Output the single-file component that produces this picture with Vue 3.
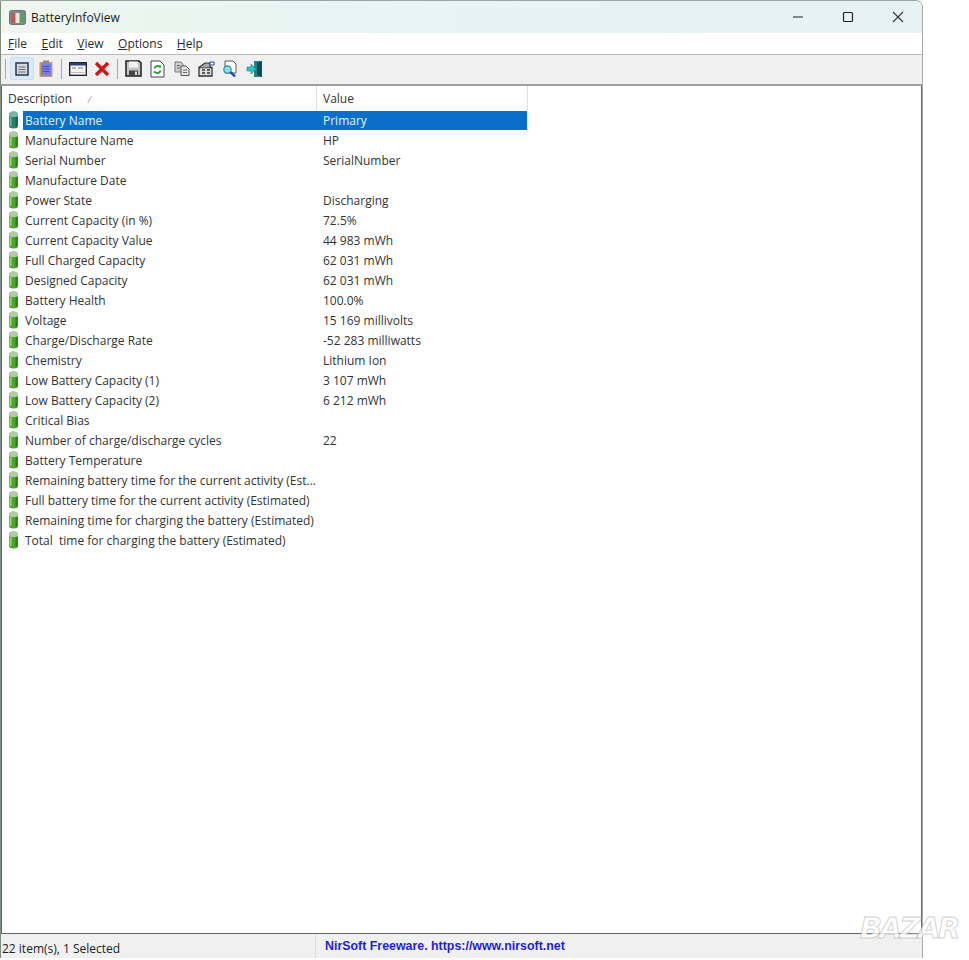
<script setup>
const menus = [
  { key: "F", rest: "ile" },
  { key: "E", rest: "dit" },
  { key: "V", rest: "iew" },
  { key: "O", rest: "ptions" },
  { key: "H", rest: "elp" },
];

const rows = [
  ["Battery Name", "Primary"],
  ["Manufacture Name", "HP"],
  ["Serial Number", "SerialNumber"],
  ["Manufacture Date", ""],
  ["Power State", "Discharging"],
  ["Current Capacity (in %)", "72.5%"],
  ["Current Capacity Value", "44 983 mWh"],
  ["Full Charged Capacity", "62 031 mWh"],
  ["Designed Capacity", "62 031 mWh"],
  ["Battery Health", "100.0%"],
  ["Voltage", "15 169 millivolts"],
  ["Charge/Discharge Rate", "-52 283 milliwatts"],
  ["Chemistry", "Lithium Ion"],
  ["Low Battery Capacity (1)", "3 107 mWh"],
  ["Low Battery Capacity (2)", "6 212 mWh"],
  ["Critical Bias", ""],
  ["Number of charge/discharge cycles", "22"],
  ["Battery Temperature", ""],
  ["Remaining battery time for the current activity (Est...", ""],
  ["Full battery time for the current activity (Estimated)", ""],
  ["Remaining time for charging the battery (Estimated)", ""],
  ["Total  time for charging the battery (Estimated)", ""],
];
</script>

<template>
  <div class="page">
    <div class="window">
      <div class="titlebar">
        <svg class="app-icon" width="17" height="15" viewBox="0 0 17 15">
          <rect x="0.500" y="0.500" width="16" height="14" rx="2" fill="#7d8794" stroke="#6d7480" />
          <rect x="2" y="3" width="4" height="10" fill="#c8574f" />
          <rect x="6.500" y="3" width="4" height="10" fill="#e9e6df" />
          <rect x="11" y="3" width="4" height="10" fill="#5aa05a" />
        </svg>
        <span class="app-title">BatteryInfoView</span>
        <div class="caption-btns">
          <svg width="12" height="12" viewBox="0 0 12 12"><path d="M1 6h10" stroke="#222" stroke-width="1" fill="none" /></svg>
          <svg width="12" height="12" viewBox="0 0 12 12"><rect x="1.500" y="1.500" width="9" height="9" rx="1" stroke="#222" stroke-width="1.200" fill="none" /></svg>
          <svg width="12" height="12" viewBox="0 0 12 12"><path d="M1 1l10 10M11 1L1 11" stroke="#333" stroke-width="1.100" fill="none" /></svg>
        </div>
      </div>

      <div class="menubar">
        <span v-for="m in menus" :key="m.key" class="menu-item"><u>{{ m.key }}</u>{{ m.rest }}</span>
      </div>

      <div class="toolbar">
        <span class="sep"></span>
        <span class="tool active">
          <svg width="14" height="14" viewBox="0 0 14 14">
            <rect x="1" y="1" width="12" height="12" fill="#d5d8dc" stroke="#2a3550" stroke-width="1.500" />
            <path d="M3.500 5h7M3.500 7.500h7M3.500 10h7" stroke="#6d7077" stroke-width="1" />
          </svg>
        </span>
        <span class="tool">
          <svg width="14" height="17" viewBox="0 0 14 17">
            <rect x="0.500" y="2" width="13" height="15" rx="1" fill="#c9975f" />
            <rect x="2" y="3.500" width="10" height="12" fill="#7a7fe6" />
            <path d="M3.500 6.500h7M3.500 9h7M3.500 11.500h7" stroke="#4a4fb5" stroke-width="1" />
            <rect x="4" y="0.500" width="6" height="3" fill="#8a8a8a" />
          </svg>
        </span>
        <span class="sep"></span>
        <span class="tool">
          <svg width="18" height="14" viewBox="0 0 18 14">
            <rect x="0.700" y="0.700" width="16.600" height="12.600" fill="#f4f4f4" stroke="#1a1a1a" stroke-width="1.300" />
            <rect x="1" y="1" width="16" height="2.500" fill="#2b3f80" />
            <path d="M3 6h4M9 6h5" stroke="#a0a0a0" stroke-width="1.600" />
            <path d="M1 10.500h16" stroke="#bbb" stroke-width="1" />
          </svg>
        </span>
        <span class="tool">
          <svg width="16" height="16" viewBox="0 0 16 16">
            <path d="M2 2l12 12M14 2L2 14" stroke="#d2161c" stroke-width="3.400" fill="none" />
          </svg>
        </span>
        <span class="sep"></span>
        <span class="tool">
          <svg width="17" height="17" viewBox="0 0 17 17">
            <path d="M1 1h13l2 2v13H1z" fill="#c4c4c4" stroke="#1c1c1c" stroke-width="1.500" />
            <rect x="4" y="1.500" width="9" height="6" fill="#f2f2f2" />
            <rect x="4" y="10.500" width="9" height="5.500" fill="#444" />
            <rect x="10" y="11.500" width="2" height="3.500" fill="#ddd" />
          </svg>
        </span>
        <span class="tool">
          <svg width="15" height="18" viewBox="0 0 15 18">
            <path d="M1 1h9l4 4v12H1z" fill="#fff" stroke="#444" stroke-width="1" />
            <path d="M4.500 8.500a3.200 3.200 0 0 1 5.500-1.500M10.500 10.500a3.200 3.200 0 0 1-5.500 1.500" stroke="#16a02c" stroke-width="1.800" fill="none" />
            <path d="M8.800 7.800l2.400-.2-.3-2.500zM6 11l-2.400.3.300 2.400z" fill="#16a02c" />
          </svg>
        </span>
        <span class="tool">
          <svg width="16" height="15" viewBox="0 0 16 15">
            <path d="M1 1h6l2 2v8H1z" fill="#ccc" stroke="#777" stroke-width="1" />
            <path d="M7 5h5l3 3v6.500H7z" fill="#e6e6e6" stroke="#555" stroke-width="1" />
            <path d="M3 4.500h3M3 7h3M9 9h4M9 11.500h4" stroke="#666" stroke-width="1" />
          </svg>
        </span>
        <span class="tool">
          <svg width="17" height="16" viewBox="0 0 17 16">
            <path d="M1 6.500h13V15H1z" fill="#e0e0e0" stroke="#333" stroke-width="1.300" />
            <path d="M1 6.500 7 2h5v4.500" fill="#aaa" stroke="#333" stroke-width="1.200" />
            <path d="M4 9h3M9 9h3M4 12h3M9 12h3" stroke="#333" stroke-width="1.300" />
            <path d="M12 1h4v3h-4z" fill="#fff" stroke="#2d45a8" stroke-width="1" />
          </svg>
        </span>
        <span class="tool">
          <svg width="17" height="18" viewBox="0 0 17 18">
            <path d="M3 1h8l3 3v9H3z" fill="#fff" stroke="#555" stroke-width="1" />
            <circle cx="5.500" cy="9.500" r="3.700" fill="#8fdcee" stroke="#2a8fb0" stroke-width="1.200" />
            <path d="M8.500 12l4.500 4.500" stroke="#2343b0" stroke-width="2.400" />
          </svg>
        </span>
        <span class="tool">
          <svg width="18" height="18" viewBox="0 0 18 18">
            <path d="M8 1h8v16H8z" fill="#2b7f86" />
            <path d="M11 3l5-2v16l-5-2z" fill="#124d55" />
            <path d="M1 7h4V4l5 5-5 5v-3H1z" fill="#27c9c4" stroke="#138a8c" stroke-width="0.600" />
          </svg>
        </span>
      </div>

      <div class="list">
        <div class="list-head">
          <div class="head-cell head-desc">Description<span class="sort-mark">⁄</span></div>
          <div class="head-cell head-value">Value</div>
        </div>
        <div v-for="(row, i) in rows" :key="row[0]" class="row">
          <svg class="battery" width="11" height="18" viewBox="0 0 11 18">
            <path d="M1 4a4.500 3.500 0 0 1 9 0v11a4.500 2.500 0 0 1-9 0z" :fill="i === 0 ? '#2b8170' : '#4aa62c'" />
            <path d="M1 4a4.500 3.500 0 0 1 9 0 4.500 2 0 0 1-9 0z" :fill="i === 0 ? '#7fb3a8' : '#b4c9ac'" />
            <path d="M2.500 6v9" :stroke="i === 0 ? '#6eb5a6' : '#8fdc6c'" stroke-width="2" />
            <path d="M8.500 6v9.500" :stroke="i === 0 ? '#1a5e52' : '#2b7d14'" stroke-width="2" />
          </svg>
          <div class="row-cells" :class="{ selected: i === 0 }">
            <span class="cell-desc">{{ row[0] }}</span>
            <span class="cell-value">{{ row[1] }}</span>
          </div>
        </div>
      </div>

      <div class="statusbar">
        <div class="status-left">22 item(s), 1 Selected</div>
        <div class="status-right">NirSoft Freeware. https://www.nirsoft.net</div>
      </div>
    </div>
    <div class="watermark">BAZAR</div>
  </div>
</template>

<style>
html,
body {
  margin: 0;
  background: #fff;
}
</style>

<style scoped>
.page {
  position: relative;
  width: 969px;
  height: 960px;
  overflow: hidden;
  font-family: "Open Sans", "Noto Sans", sans-serif;
  font-size: 12px;
  color: #222;
  background: #fff;
}

.window {
  width: 923px;
  height: 958px;
  display: flex;
  flex-direction: column;
  box-sizing: border-box;
  border-top-right-radius: 7px;
  border-right: 1px solid #a9a9a9;
  border-top: 1px solid #9aa3a3;
  border-left: 1px solid #7f8f7f;
  background: #fff;
  overflow: hidden;
}

.titlebar {
  height: 32px;
  flex: none;
  display: flex;
  align-items: center;
  padding-left: 8px;
  background: linear-gradient(90deg, #eef6ee, #e6f4f3 45%, #e6f2f6);
}
.app-icon {
  margin-right: 5px;
}
.app-title {
  font-size: 12px;
  color: #1b1b1b;
}
.caption-btns {
  margin-left: auto;
  display: flex;
  gap: 38px;
  padding-right: 18px;
}

.menubar {
  height: 22px;
  flex: none;
  display: flex;
  align-items: center;
  gap: 14.500px;
  padding-left: 7px;
  box-sizing: border-box;
  border-bottom: 1px solid #b9b9b9;
  color: #2a2a2a;
}

.toolbar {
  height: 31px;
  flex: none;
  display: flex;
  align-items: center;
  padding: 0 0 2px 1px;
  box-sizing: border-box;
  background: #f0f0f0;
  border-bottom: 2px solid #9f9f9f;
}
.sep {
  width: 1px;
  height: 20px;
  background: #a8a8a8;
  margin: 0 3.800px 0 2.800px;
}
.tool {
  width: 24.200px;
  height: 23px;
  display: flex;
  align-items: center;
  justify-content: center;
  box-sizing: border-box;
}
.tool.active {
  background: #d8e9f7;
  border: 1px solid #c9e0f2;
  border-radius: 2px;
}

.list {
  flex: 1;
  border-left: 1px solid #666;
  border-right: 1px solid #666;
  border-bottom: 1px solid #666;
  background: #fff;
}
.list-head {
  height: 24px;
  display: flex;
}
.head-cell {
  box-sizing: border-box;
  height: 24px;
  line-height: 25px;
  padding-left: 6px;
  color: #333;
  border-right: 1px solid #dedede;
}
.head-desc {
  width: 315px;
}
.head-value {
  width: 211px;
}
.sort-mark {
  margin-left: 17px;
  font-size: 9px;
  color: #888;
}

.row {
  height: 20px;
  display: flex;
  align-items: center;
}
.battery {
  flex: none;
  margin-left: 6px;
  margin-right: 4px;
}
.row-cells {
  display: flex;
  height: 19px;
  line-height: 19px;
  align-items: center;
  color: #333;
}
.row-cells.selected {
  background: #0a6fc9;
  color: #e8f1fb;
}
.cell-desc {
  width: 300px;
  padding-left: 2px;
  box-sizing: border-box;
  white-space: pre;
}
.cell-value {
  width: 204px;
  box-sizing: border-box;
}

.statusbar {
  height: 24px;
  flex: none;
  display: flex;
  background: #f0f0f0;
}
.status-left {
  width: 314px;
  box-sizing: border-box;
  padding: 6px 0 0 1px;
}
.status-right {
  padding: 5px 0 0 9px;
  border-left: 1px solid #dcdcdc;
  color: #1f1fd0;
  font-family: "Liberation Sans", sans-serif;
  font-weight: 700;
  font-size: 12.400px;
}

.watermark {
  position: absolute;
  left: 860px;
  top: 911px;
  font-family: "DejaVu Sans", sans-serif;
  font-weight: 700;
  font-style: italic;
  font-size: 29px;
  letter-spacing: -2.500px;
  color: rgba(255, 255, 255, 0.75);
  -webkit-text-stroke: 1px rgba(190, 190, 190, 0.7);
}
</style>
